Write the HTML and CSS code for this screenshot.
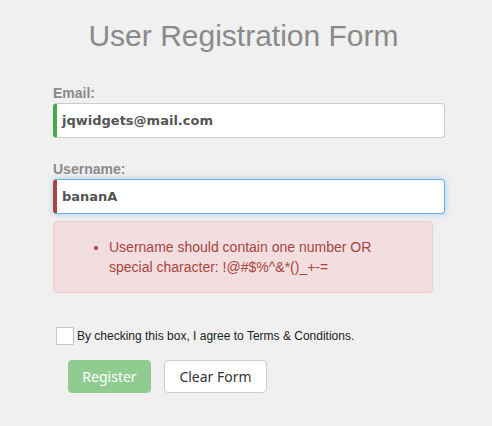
FILE: index.html
```html
<!DOCTYPE html>
<html>
<head>
<meta charset="utf-8">
<link rel="stylesheet" href="styles.css">
</head>
<body>
<div class="page">
  <h1 class="title">User Registration Form</h1>
  <form class="form">
    <div class="field">
      <label class="label">Email:</label>
      <div class="input valid">jqwidgets@mail.com</div>
    </div>
    <div class="field">
      <label class="label">Username:</label>
      <div class="input invalid focused">bananA</div>
      <div class="error">
        <ul>
          <li>Username should contain one number OR special character: !@#$%^&amp;*()_+-=</li>
        </ul>
      </div>
    </div>
    <div class="agree">
      <span class="checkbox"></span>
      <span class="agree-text">By checking this box, I agree to Terms &amp; Conditions.</span>
    </div>
    <div class="buttons">
      <button type="button" class="btn btn-primary">Register</button>
      <button type="button" class="btn btn-default">Clear Form</button>
    </div>
  </form>
</div>
</body>
</html>
```
FILE: styles.css
```css
html, body {
  margin: 0;
  padding: 0;
  background: #f0f0f0;
}
.page {
  width: 492px;
  height: 426px;
  font-family: "Liberation Sans", Arial, sans-serif;
}
.title {
  margin: 0;
  padding-top: 16px;
  font-size: 30px;
  font-weight: normal;
  line-height: 40px;
  color: #8a8a8a;
  text-align: center;
  padding-right: 5px;
}
.form {
  margin-left: 53px;
  width: 392px;
  padding-top: 27px;
}
.field {
  display: flex;
  flex-direction: column;
}
.field + .field {
  margin-top: 21px;
}
.label {
  font-size: 14px;
  font-weight: bold;
  line-height: 16px;
  color: #8a8a8a;
  margin-bottom: 2px;
  margin-top: 2px;
}
.input {
  box-sizing: border-box;
  height: 35px;
  background: #fff;
  border: 1px solid #ccc;
  border-radius: 4px;
  padding: 0 0 0 5px;
  font-family: "DejaVu Sans", Verdana, sans-serif;
  font-weight: bold;
  font-size: 13px;
  line-height: 33px;
  color: #555;
}
.input.valid {
  border-left: 4px solid #43a94a;
}
.input.invalid {
  border-left: 4px solid #a94442;
}
.input.focused {
  border-color: #66afe9;
  border-left-color: #a94442;
  box-shadow: 0 0 6px rgba(102, 175, 233, 0.5);
}
.error {
  box-sizing: border-box;
  width: 380px;
  margin-top: 7px;
  background: #f2dede;
  border: 1px solid #ebccd1;
  border-radius: 4px;
  padding: 15px;
  color: #a94442;
  font-size: 14px;
  line-height: 20px;
}
.error ul {
  margin: 0;
  padding-left: 40px;
}
.agree {
  display: flex;
  align-items: center;
  margin-top: 34px;
  margin-left: 3px;
}
.checkbox {
  box-sizing: border-box;
  width: 18px;
  height: 18px;
  background: #fff;
  border: 1px solid #c8c8c8;
  margin-right: 3px;
}
.agree-text {
  font-family: "Liberation Sans", Arial, sans-serif;
  font-size: 12px;
  color: #222;
}
.buttons {
  display: flex;
  gap: 13px;
  margin-top: 15px;
  margin-left: 15px;
}
.btn {
  box-sizing: border-box;
  height: 33px;
  border-radius: 4px;
  font-family: "Noto Sans", sans-serif;
  font-size: 14px;
  padding: 0;
  margin: 0;
  white-space: nowrap;
  text-align: center;
}
.btn-primary {
  width: 83px;
  background: #90cc90;
  border: 1px solid #90cc90;
  color: #fff;
}
.btn-default {
  width: 103px;
  background: #fff;
  border: 1px solid #ccc;
  color: #333;
}
```
